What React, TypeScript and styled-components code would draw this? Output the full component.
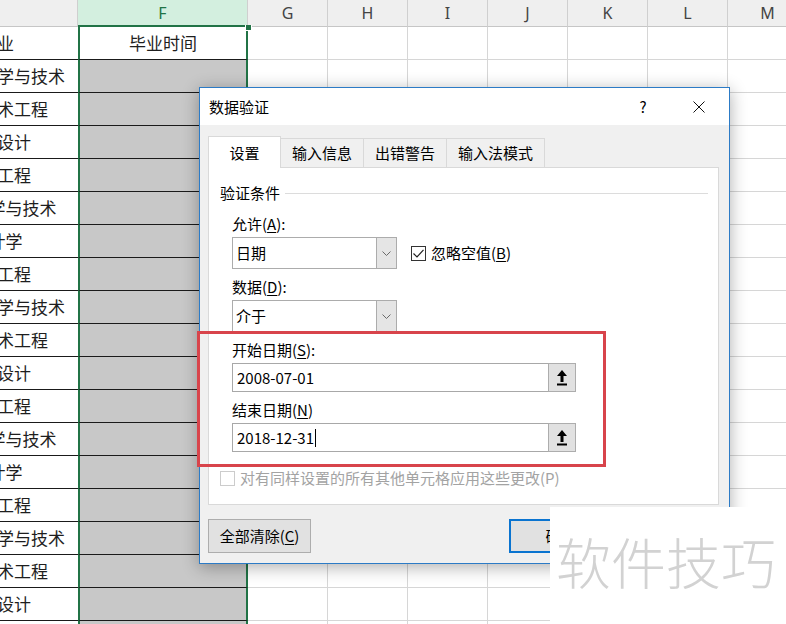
import React from 'react';
import styled, { createGlobalStyle } from 'styled-components';

const CJK = `"Noto Sans CJK SC", "Microsoft YaHei", sans-serif`;

const GlobalStyle = createGlobalStyle`
  html, body {
    margin: 0;
    padding: 0;
    background: #fff;
  }
  body {
    overflow: hidden;
  }
`;

const Screen = styled.div`
  position: relative;
  width: 786px;
  height: 624px;
  overflow: hidden;
  background: #fff;
  font-family: ${CJK};
`;

/* ---------- spreadsheet ---------- */

const Sheet = styled.div`
  display: grid;
  grid-template-columns: 162px 170px repeat(7, 80px);
  grid-template-rows: 27px;
  grid-auto-rows: 33px;
  margin-left: -84px;
  width: max-content;
`;

const HeadCell = styled.div<{ $active?: boolean }>`
  box-sizing: border-box;
  display: flex;
  justify-content: center;
  padding-top: 3px;
  background: ${(p) => (p.$active ? '#d3efdf' : '#efefef')};
  border-right: 1px solid #cfcfcf;
  border-bottom: ${(p) => (p.$active ? '2px solid #217346' : '1px solid #c6c6c6')};
  color: ${(p) => (p.$active ? '#217346' : '#444')};
  font: 16px/20px "Noto Sans", sans-serif;
`;

const Cell = styled.div<{ $kind: 'label' | 'pick' | 'plain'; $blank?: boolean }>`
  box-sizing: border-box;
  display: flex;
  align-items: center;
  justify-content: center;
  overflow: hidden;
  white-space: nowrap;
  font: 17px/22px ${CJK};
  color: #1e1e1e;
  border-bottom: 1px solid ${(p) => (p.$kind === 'plain' ? '#d6d6d6' : '#1a1a1a')};
  border-right: ${(p) => (p.$kind === 'plain' ? '1px solid #d6d6d6' : 'none')};
  ${(p) =>
    p.$kind === 'pick' &&
    `
    border-left: 2px solid #217346;
    border-right: 2px solid #217346;
    background: ${p.$blank ? '#fff' : '#c8c8c8'};
  `}
`;

const FillHandle = styled.div`
  position: absolute;
  left: 245px;
  top: 25px;
  width: 5px;
  height: 5px;
  background: #217346;
  border: 1px solid #fff;
  border-top: none;
`;

/* ---------- dialog ---------- */

const Dialog = styled.div`
  position: absolute;
  left: 199px;
  top: 87px;
  width: 531px;
  height: 477px;
  box-sizing: border-box;
  border: 1px solid #2c7bc6;
  background: #f0f0f0;
  box-shadow: 0 3px 16px rgba(0, 0, 0, 0.32);
  display: flex;
  flex-direction: column;
  font: 15px/20px ${CJK};
  color: #000;
`;

const TitleBar = styled.div`
  flex: none;
  height: 37px;
  background: #fff;
  display: flex;
  align-items: center;
  padding: 0 7px 0 9px;
`;

const Title = styled.span`
  flex: 1;
`;

const TitleButton = styled.div`
  width: 46px;
  height: 37px;
  display: flex;
  align-items: center;
  justify-content: center;
  & + & {
    margin-left: 10px;
  }
`;

const Body = styled.div`
  flex: 1;
  display: flex;
  flex-direction: column;
  padding: 11px 8px 0;
`;

const Tabs = styled.div`
  display: flex;
  align-items: flex-end;
  height: 32px;
  margin-bottom: -1px;
  position: relative;
  z-index: 1;
`;

const Tab = styled.div<{ $active?: boolean; $w: number }>`
  box-sizing: border-box;
  width: ${(p) => p.$w}px;
  height: ${(p) => (p.$active ? 32 : 30)}px;
  display: flex;
  align-items: center;
  justify-content: center;
  background: ${(p) => (p.$active ? '#fff' : '#f0f0f0')};
  border: 1px solid #d9d9d9;
  border-bottom: ${(p) => (p.$active ? 'none' : '1px solid #d9d9d9')};
  & + & {
    margin-left: -1px;
  }
`;

const Panel = styled.div`
  box-sizing: border-box;
  width: 511px;
  height: 338px;
  background: #fff;
  border: 1px solid #d9d9d9;
  padding: 15px 10px 0 11px;
`;

const GroupHeader = styled.div`
  display: flex;
  align-items: center;
  height: 20px;
`;

const GroupLine = styled.div`
  flex: 1;
  height: 1px;
  margin-left: 5px;
  background: #dcdcdc;
`;

const Fields = styled.div`
  padding-left: 12px;
`;

const Field = styled.div`
  margin-top: 8px;
  &:first-child {
    margin-top: 11px;
  }
`;

const Label = styled.div`
  height: 20px;
`;

const Key = styled.span`
  text-decoration: underline;
  text-underline-offset: 2px;
`;

const ControlRow = styled.div`
  display: flex;
  align-items: center;
  margin-top: 3px;
`;

const Combo = styled.div`
  box-sizing: border-box;
  width: 165px;
  height: 32px;
  display: flex;
  border: 1px solid #acacac;
  background: #fff;
`;

const ComboText = styled.div`
  flex: 1;
  display: flex;
  align-items: center;
  padding-left: 3px;
`;

const ComboArrow = styled.div`
  width: 19px;
  display: flex;
  align-items: center;
  justify-content: center;
  background: #e5e5e5;
  border-left: 1px solid #acacac;
`;

const Check = styled.div<{ $disabled?: boolean }>`
  display: flex;
  align-items: center;
  gap: 5px;
  color: ${(p) => (p.$disabled ? '#a3a3a3' : '#000')};
`;

const CheckBox = styled.div<{ $disabled?: boolean }>`
  box-sizing: border-box;
  width: 15px;
  height: 15px;
  display: flex;
  align-items: center;
  justify-content: center;
  background: #fff;
  border: 1px solid ${(p) => (p.$disabled ? '#cccccc' : '#333')};
`;

const CheckLine = styled(Check)`
  margin-left: 14px;
`;

const RangeInput = styled.div`
  box-sizing: border-box;
  width: 344px;
  height: 29px;
  display: flex;
  border: 1px solid #a8a8a8;
  background: #fff;
`;

const RangeText = styled.div`
  flex: 1;
  display: flex;
  align-items: center;
  padding-left: 4px;
`;

const Caret = styled.span`
  width: 1px;
  height: 18px;
  margin-left: 1px;
  background: #000;
`;

const RangeButton = styled.div`
  box-sizing: border-box;
  width: 28px;
  margin: -1px -1px -1px 0;
  display: flex;
  align-items: center;
  justify-content: center;
  background: #e1e1e1;
  border: 1px solid #adadad;
`;

const ApplyAll = styled(Check)`
  margin-top: 16px;
  height: 20px;
`;

const Footer = styled.div`
  display: flex;
  margin-top: 14px;
`;

const Button = styled.div<{ $default?: boolean }>`
  box-sizing: border-box;
  width: 103px;
  height: 34px;
  display: flex;
  align-items: center;
  justify-content: center;
  background: #e1e1e1;
  border: ${(p) => (p.$default ? '2px solid #0a74d0' : '1px solid #adadad')};
`;

const Spacer = styled.div`
  flex: 1;
`;

const ButtonGap = styled.div`
  width: 6px;
`;

/* ---------- overlays ---------- */

const Highlight = styled.div`
  position: absolute;
  left: 197px;
  top: 331px;
  width: 409px;
  height: 136px;
  box-sizing: border-box;
  border: 3px solid #d8444b;
`;

const Watermark = styled.div`
  position: absolute;
  left: 550px;
  top: 507px;
  right: 0;
  bottom: 0;
  background: #fff;
  padding: 26px 0 0 6px;
  font: 300 55px/1 ${CJK};
  color: #d2d2d2;
  white-space: nowrap;
`;

/* ---------- icons ---------- */

const CloseIcon = () => (
  <svg width="12" height="12" viewBox="0 0 12 12">
    <path d="M0.5 0.5 L11.5 11.5 M11.5 0.5 L0.5 11.5" stroke="#111" strokeWidth="1" fill="none" />
  </svg>
);

const Chevron = () => (
  <svg width="9" height="5" viewBox="0 0 9 5">
    <path d="M0.5 0.5 L4.5 4.5 L8.5 0.5" stroke="#6a6a6a" strokeWidth="1" fill="none" />
  </svg>
);

const Tick = () => (
  <svg width="11" height="9" viewBox="0 0 11 9">
    <path d="M0.5 4.5 L4 8 L10.5 0.8" stroke="#222" strokeWidth="1.2" fill="none" />
  </svg>
);

const CollapseIcon = () => (
  <svg width="10" height="16" viewBox="0 0 10 16">
    <path d="M5 0 L10 6 L6.5 6 L6.5 12 L3.5 12 L3.5 6 L0 6 Z" fill="#000" />
    <rect x="0" y="13.5" width="10" height="2" fill="#000" />
  </svg>
);

/* ---------- data ---------- */

const columns = ['E', 'F', 'G', 'H', 'I', 'J', 'K', 'L', 'M'];
const majors = ['计算机科学与技术', '软件技术工程', '环境设计', '网络工程', '电子科学与技术', '统计学', '软件工程'];
const rows = [
  { major: '专业', date: '毕业时间', head: true },
  ...Array.from({ length: 18 }, (_, i) => ({ major: majors[i % majors.length], date: '', head: false })),
];

const tabs = [
  { label: '设置', w: 73 },
  { label: '输入信息', w: 84 },
  { label: '出错警告', w: 84 },
  { label: '输入法模式', w: 99 },
];

export default function App() {
  return (
    <Screen>
      <GlobalStyle />

      <Sheet>
        {columns.map((c) => (
          <HeadCell key={c} $active={c === 'F'}>
            {c === 'E' ? '' : c}
          </HeadCell>
        ))}
        {rows.map((r, i) => (
          <React.Fragment key={i}>
            <Cell $kind="label">{r.major}</Cell>
            <Cell $kind="pick" $blank={r.head}>
              {r.date}
            </Cell>
            {columns.slice(2).map((c) => (
              <Cell key={c} $kind="plain" />
            ))}
          </React.Fragment>
        ))}
      </Sheet>
      <FillHandle />

      <Dialog>
        <TitleBar>
          <Title>数据验证</Title>
          <TitleButton>?</TitleButton>
          <TitleButton>
            <CloseIcon />
          </TitleButton>
        </TitleBar>

        <Body>
          <Tabs>
            {tabs.map((t, i) => (
              <Tab key={t.label} $w={t.w} $active={i === 0}>
                {t.label}
              </Tab>
            ))}
          </Tabs>

          <Panel>
            <GroupHeader>
              验证条件
              <GroupLine />
            </GroupHeader>

            <Fields>
              <Field>
                <Label>
                  允许(<Key>A</Key>):
                </Label>
                <ControlRow>
                  <Combo>
                    <ComboText>日期</ComboText>
                    <ComboArrow>
                      <Chevron />
                    </ComboArrow>
                  </Combo>
                  <CheckLine>
                    <CheckBox>
                      <Tick />
                    </CheckBox>
                    <span>
                      忽略空值(<Key>B</Key>)
                    </span>
                  </CheckLine>
                </ControlRow>
              </Field>

              <Field>
                <Label>
                  数据(<Key>D</Key>):
                </Label>
                <ControlRow>
                  <Combo>
                    <ComboText>介于</ComboText>
                    <ComboArrow>
                      <Chevron />
                    </ComboArrow>
                  </Combo>
                </ControlRow>
              </Field>

              <Field>
                <Label>
                  开始日期(<Key>S</Key>):
                </Label>
                <ControlRow>
                  <RangeInput>
                    <RangeText>2008-07-01</RangeText>
                    <RangeButton>
                      <CollapseIcon />
                    </RangeButton>
                  </RangeInput>
                </ControlRow>
              </Field>

              <Field>
                <Label>
                  结束日期(<Key>N</Key>)
                </Label>
                <ControlRow>
                  <RangeInput>
                    <RangeText>
                      2018-12-31
                      <Caret />
                    </RangeText>
                    <RangeButton>
                      <CollapseIcon />
                    </RangeButton>
                  </RangeInput>
                </ControlRow>
              </Field>
            </Fields>

            <ApplyAll $disabled>
              <CheckBox $disabled />
              <span>对有同样设置的所有其他单元格应用这些更改(P)</span>
            </ApplyAll>
          </Panel>

          <Footer>
            <Button>
              全部清除(<Key>C</Key>)
            </Button>
            <Spacer />
            <Button $default>确定</Button>
            <ButtonGap />
            <Button>取消</Button>
          </Footer>
        </Body>
      </Dialog>

      <Highlight />
      <Watermark>软件技巧</Watermark>
    </Screen>
  );
}
